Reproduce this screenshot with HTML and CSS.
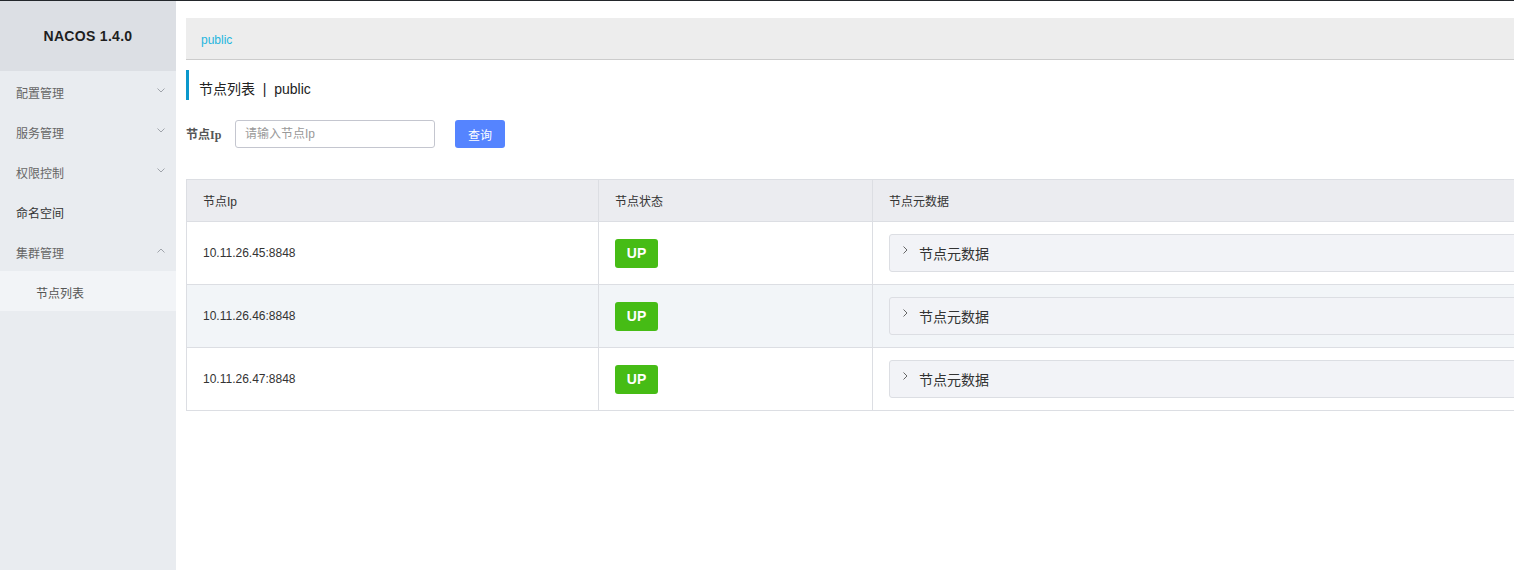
FILE: index.html
```html
<!DOCTYPE html>
<html lang="zh-CN">
<head>
<meta charset="utf-8">
<title>Nacos</title>
<link rel="stylesheet" href="styles.css">
</head>
<body>
<div class="app">
  <aside class="sidebar">
    <div class="brand">NACOS 1.4.0</div>
    <ul class="menu">
      <li class="menu-item"><span>配置管理</span><svg class="chev" viewBox="0 0 8 5" width="8" height="5"><path d="M0.5 0.5 L4 4 L7.5 0.5" fill="none" stroke="#a0a4ab" stroke-width="1"/></svg></li>
      <li class="menu-item"><span>服务管理</span><svg class="chev" viewBox="0 0 8 5" width="8" height="5"><path d="M0.5 0.5 L4 4 L7.5 0.5" fill="none" stroke="#a0a4ab" stroke-width="1"/></svg></li>
      <li class="menu-item"><span>权限控制</span><svg class="chev" viewBox="0 0 8 5" width="8" height="5"><path d="M0.5 0.5 L4 4 L7.5 0.5" fill="none" stroke="#a0a4ab" stroke-width="1"/></svg></li>
      <li class="menu-item dark"><span>命名空间</span></li>
      <li class="menu-item"><span>集群管理</span><svg class="chev" viewBox="0 0 8 5" width="8" height="5"><path d="M0.5 4.5 L4 1 L7.5 4.5" fill="none" stroke="#a0a4ab" stroke-width="1"/></svg></li>
      <li class="menu-sub">节点列表</li>
    </ul>
  </aside>
  <main class="main">
    <div class="ns-bar"><span class="ns-link">public</span></div>
    <div class="page-title">节点列表&nbsp;&nbsp;|&nbsp;&nbsp;public</div>
    <div class="search">
      <span class="search-label">节点Ip</span>
      <input class="search-input" type="text" placeholder="请输入节点Ip">
      <button class="btn-primary">查询</button>
    </div>
    <table class="grid">
      <colgroup><col class="c1"><col class="c2"><col class="c3"></colgroup>
      <thead>
        <tr><th>节点Ip</th><th>节点状态</th><th>节点元数据</th></tr>
      </thead>
      <tbody>
        <tr>
          <td>10.11.26.45:8848</td>
          <td><span class="tag-up">UP</span></td>
          <td><div class="collapse"><svg class="arrow" viewBox="0 0 5 8" width="5" height="8"><path d="M0.5 0.5 L4 4 L0.5 7.5" fill="none" stroke="#666" stroke-width="1"/></svg><span>节点元数据</span></div></td>
        </tr>
        <tr class="alt">
          <td>10.11.26.46:8848</td>
          <td><span class="tag-up">UP</span></td>
          <td><div class="collapse"><svg class="arrow" viewBox="0 0 5 8" width="5" height="8"><path d="M0.5 0.5 L4 4 L0.5 7.5" fill="none" stroke="#666" stroke-width="1"/></svg><span>节点元数据</span></div></td>
        </tr>
        <tr>
          <td>10.11.26.47:8848</td>
          <td><span class="tag-up">UP</span></td>
          <td><div class="collapse"><svg class="arrow" viewBox="0 0 5 8" width="5" height="8"><path d="M0.5 0.5 L4 4 L0.5 7.5" fill="none" stroke="#666" stroke-width="1"/></svg><span>节点元数据</span></div></td>
        </tr>
      </tbody>
    </table>
  </main>
</div>
</body>
</html>
```

FILE: styles.css
```css
html, body {
  margin: 0;
  padding: 0;
  height: 100%;
  overflow: hidden;
}
body {
  font-family: "Liberation Sans", "Noto Sans CJK SC", sans-serif;
  font-size: 12px;
  color: #333;
  background: #fff;
  border-top: 1px solid #23272b;
  box-sizing: border-box;
}
.app {
  display: flex;
  height: 100%;
}
.sidebar {
  width: 176px;
  flex: 0 0 176px;
  background: #e9ecf0;
  height: 100%;
}
.brand {
  height: 70px;
  background: #dcdfe4;
  display: flex;
  align-items: center;
  justify-content: center;
  font-weight: bold;
  font-size: 14px;
  color: #1e1e1e;
  letter-spacing: 0.3px;
}
.menu {
  list-style: none;
  margin: 0;
  padding: 0;
}
.menu-item {
  height: 40px;
  display: flex;
  align-items: center;
  justify-content: space-between;
  padding: 2px 11px 0 16px;
  box-sizing: border-box;
  color: #666;
  font-size: 12px;
}
.menu-item .chev {
  margin-top: -3px;
}
.menu-item.dark {
  color: #333;
}
.menu-sub {
  height: 40px;
  display: flex;
  align-items: center;
  padding: 2px 0 0 36px;
  box-sizing: border-box;
  background: #f2f4f7;
  color: #555;
}
.main {
  flex: 1 1 auto;
  min-width: 0;
  overflow: hidden;
  padding: 17px 0 0 10px;
  box-sizing: border-box;
}
.ns-bar {
  height: 42px;
  width: 1400px;
  background: #ededed;
  border-bottom: 1px solid #cccccc;
  box-sizing: border-box;
  display: flex;
  align-items: center;
  padding: 3px 0 0 15px;
}
.ns-link {
  color: #26b6de;
  font-size: 12px;
}
.page-title {
  margin-top: 10px;
  height: 30px;
  border-left: 3px solid #0a98cc;
  padding: 5px 0 0 10px;
  box-sizing: border-box;
  display: flex;
  align-items: center;
  font-size: 14px;
  color: #222;
}
.search {
  margin-top: 20px;
  display: flex;
  align-items: center;
  height: 28px;
}
.search-label {
  font-family: "Liberation Serif", "Noto Sans CJK SC", serif;
  font-weight: bold;
  font-size: 12px;
  color: #555;
  width: 49px;
}
.search-input {
  width: 200px;
  height: 28px;
  box-sizing: border-box;
  border: 1px solid #c4c6cf;
  border-radius: 3px;
  padding: 0 9px;
  font-family: "Liberation Sans", "Noto Sans CJK SC", sans-serif;
  font-size: 12px;
  color: #333;
  outline: none;
}
.search-input::placeholder {
  color: #999;
}
.btn-primary {
  margin-left: 20px;
  width: 50px;
  height: 28px;
  border: 0;
  border-radius: 3px;
  background: #5584ff;
  color: #fff;
  font-family: "Liberation Sans", "Noto Sans CJK SC", sans-serif;
  font-size: 12px;
  padding: 0;
}
.grid {
  margin-top: 31px;
  width: 1480px;
  border-collapse: collapse;
  table-layout: fixed;
  border: 1px solid #dcdee3;
}
.grid col.c1 { width: 412px; }
.grid col.c2 { width: 274px; }
.grid th {
  height: 42px;
  box-sizing: border-box;
  background: #ebecf0;
  border: 1px solid #dcdee3;
  text-align: left;
  font-weight: normal;
  color: #333;
  font-size: 12px;
  padding: 0 16px;
}
.grid td {
  height: 63px;
  box-sizing: border-box;
  border: 1px solid #dcdee3;
  padding: 0 16px;
  color: #333;
  font-size: 12px;
  vertical-align: middle;
}
.grid tr.alt td {
  background: #f2f5f8;
}
.tag-up {
  display: inline-flex;
  align-items: center;
  justify-content: center;
  width: 43px;
  height: 29px;
  background: #46bc15;
  color: #fff;
  font-weight: bold;
  font-size: 14px;
  border-radius: 3px;
}
.collapse {
  height: 38px;
  box-sizing: border-box;
  background: #f2f3f7;
  border: 1px solid #dcdee3;
  border-radius: 3px;
  display: flex;
  align-items: center;
  padding-left: 13px;
  font-size: 14px;
  color: #333;
}
.collapse .arrow {
  margin-right: 11px;
  margin-top: -6px;
}
```
